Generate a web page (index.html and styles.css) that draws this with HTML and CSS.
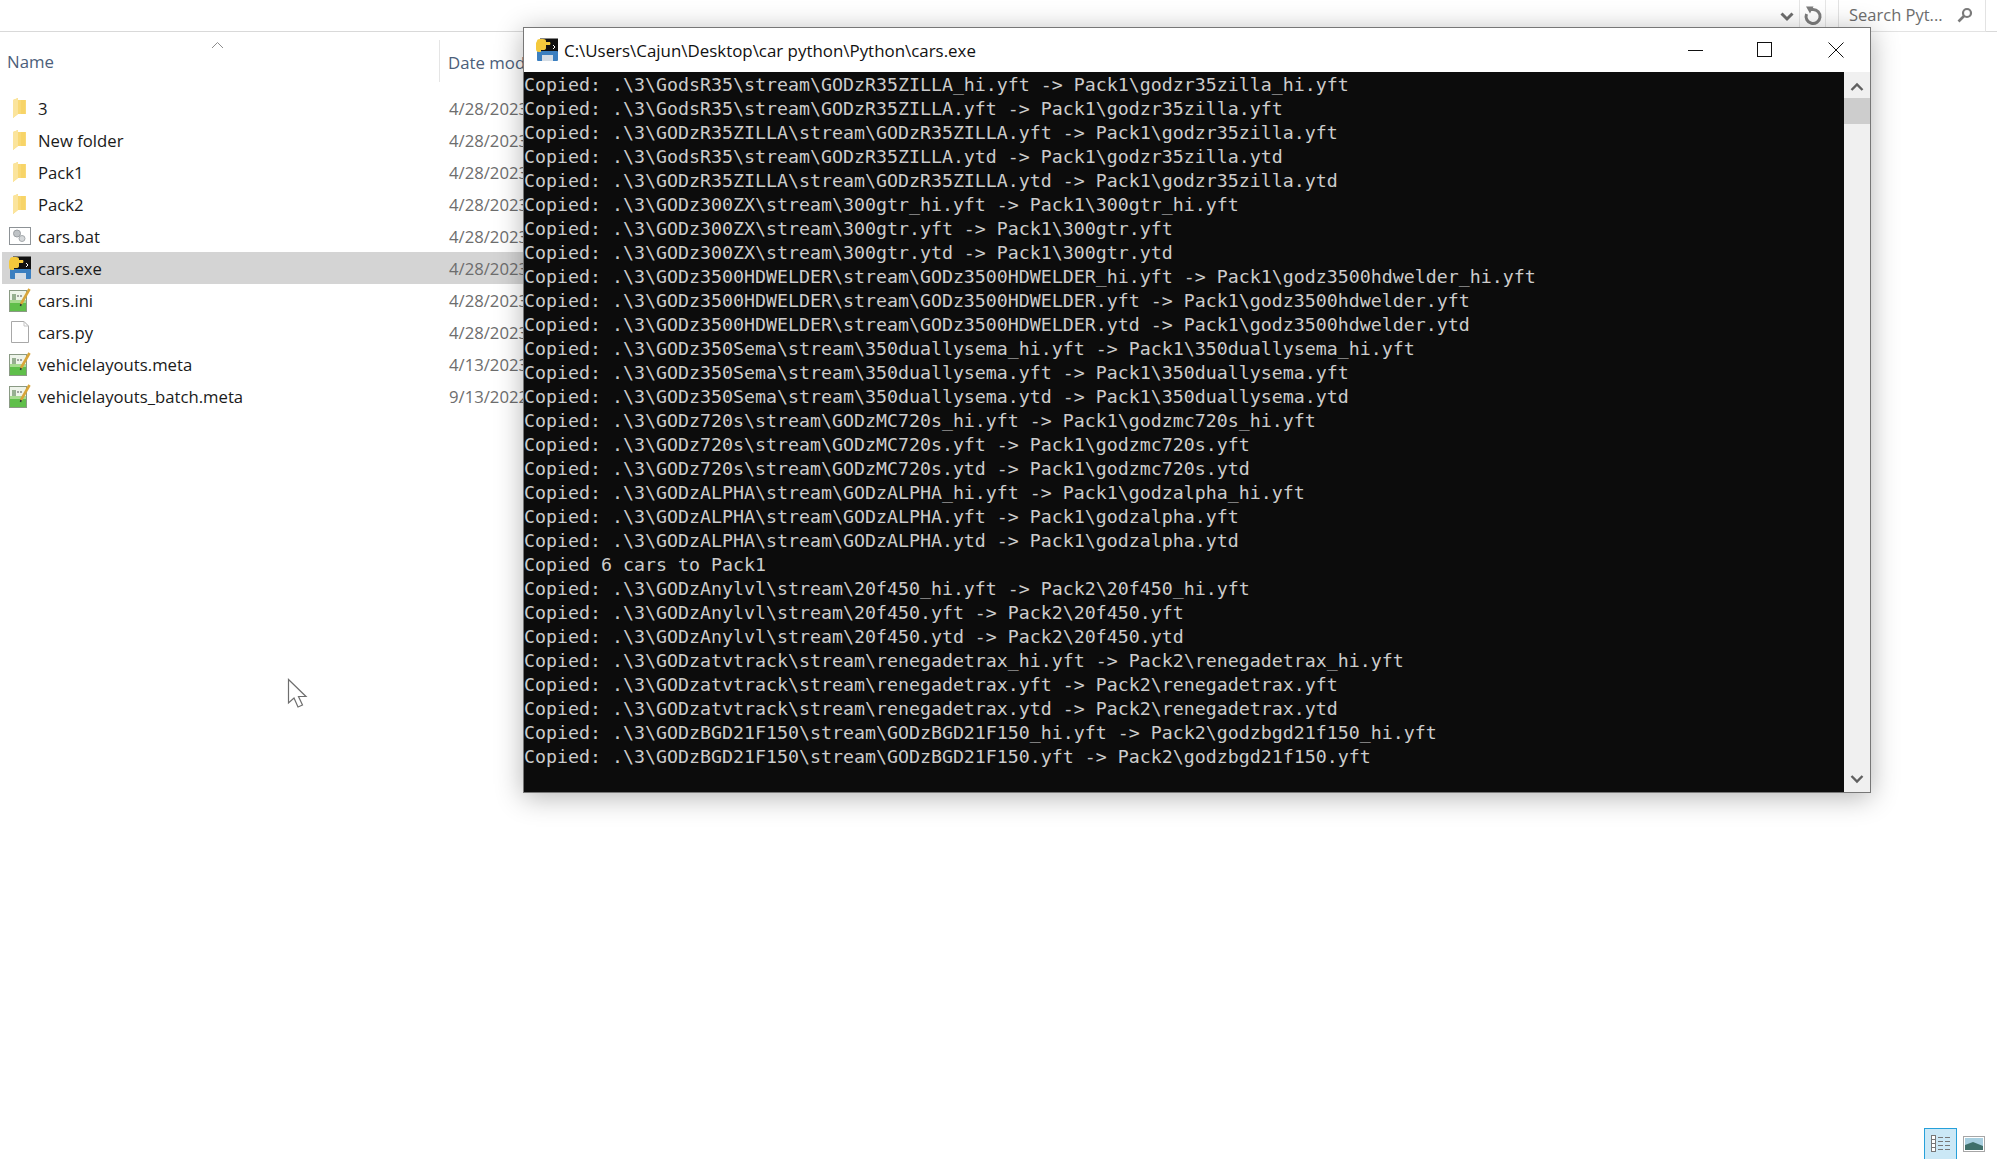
FILE: index.html
```html
<!DOCTYPE html>
<html lang="en">
<head>
<meta charset="utf-8">
<title>cars.exe</title>
<link rel="stylesheet" href="styles.css">
</head>
<body>
<svg class="defs" width="0" height="0" aria-hidden="true">
  <symbol id="folder" viewBox="0 0 22 22">
    <path d="M4 3 L9 1 L9 3 L17 3 L17 17 L9 17 L4 21 Z" fill="#f9d976"/>
    <path d="M4 3 L9 1 L9 17 L4 21 Z" fill="#fbe49c"/>
    <path d="M12 3 H16 V17 H12 Z" fill="#f7d468"/>
  </symbol>
  <symbol id="notes" viewBox="0 0 24 26">
    <rect x="1.5" y="3.5" width="17" height="21" fill="#eef4ea" stroke="#8a9a84"/>
    <path d="M2 15 H18 V24 H2 Z" fill="#5fbf4a"/>
    <path d="M2 13 H18 V16 H2 Z" fill="#a6db8f"/>
    <path d="M5 7 V13 M7 7 V13" stroke="#3f6b36" stroke-width="1"/>
    <path d="M9 9 H14" stroke="#555" stroke-width="1.2" stroke-dasharray="2 1"/>
    <path d="M13 17 L21.500 2" stroke="#d8a53a" stroke-width="2.600"/>
    <path d="M13 17 L12.500 19" stroke="#333" stroke-width="1.500"/>
  </symbol>
  <symbol id="py" viewBox="0 0 24 24">
    <rect x="5" y="0.500" width="18" height="14" fill="#111"/>
    <rect x="2" y="13" width="21" height="10" rx="1" fill="#3b7fc0"/>
    <rect x="7" y="17" width="11" height="6" fill="#d5dde5"/>
    <path d="M2 3 Q2 1 5 1 H8 Q11 1 11 3 V10 Q11 12 8 12 H6 V14 H4 Q1 14 1 11 V5 Z" fill="#f4c93c"/>
    <path d="M11 4 H15 Q16 5 15 7 H11 Z" fill="#f4c93c"/>
    <path d="M18 7 L20 9 L18 11" fill="none" stroke="#fff" stroke-width="1"/>
  </symbol>
</svg>

<div class="explorer">
  <header class="toolbar">
    <svg class="tool-chevron" width="14" height="10" viewBox="0 0 14 10"><path d="M1.500 1.500 L7 7 L12.500 1.500" fill="none" stroke="#6e6e6e" stroke-width="3"/></svg>
    <span class="tool-refresh">
      <svg width="20" height="20" viewBox="0 0 20 20"><path d="M7 3.500 H10 A7 7 0 1 1 3.500 8" fill="none" stroke="#7d7d7d" stroke-width="3"/><path d="M3 0.500 L10.500 0.500 L7 7.500 Z" fill="#7d7d7d"/></svg>
    </span>
    <div class="search">
      <span class="search-text">Search Pyt...</span>
      <svg width="16" height="16" viewBox="0 0 16 16"><circle cx="10" cy="6" r="4" fill="none" stroke="#7a7a7a" stroke-width="2.200"/><path d="M7 9 L1.500 14.500" stroke="#7a7a7a" stroke-width="2.600"/></svg>
    </div>
  </header>

  <div class="columns">
    <div class="col-name">
      <span>Name</span>
      <svg class="sort" width="13" height="8" viewBox="0 0 13 8"><path d="M1 7 L6.500 1.500 L12 7" fill="none" stroke="#8c8c8c"/></svg>
    </div>
    <div class="col-date">Date modified</div>
  </div>

  <ul class="files">
    <li class="file"><span class="ficon"><svg width="22" height="22"><use href="#folder"/></svg></span><span class="fname">3</span><span class="fdate">4/28/2023</span></li>
    <li class="file"><span class="ficon"><svg width="22" height="22"><use href="#folder"/></svg></span><span class="fname">New folder</span><span class="fdate">4/28/2023</span></li>
    <li class="file"><span class="ficon"><svg width="22" height="22"><use href="#folder"/></svg></span><span class="fname">Pack1</span><span class="fdate">4/28/2023</span></li>
    <li class="file"><span class="ficon"><svg width="22" height="22"><use href="#folder"/></svg></span><span class="fname">Pack2</span><span class="fdate">4/28/2023</span></li>
    <li class="file">
      <span class="ficon"><svg width="24" height="20" viewBox="0 0 24 20"><rect x="1.500" y="1.500" width="21" height="17" fill="#fff" stroke="#8d9296"/><circle cx="9" cy="7.500" r="3.500" fill="#bfc3c6" stroke="#9a9ea2"/><circle cx="14" cy="12.500" r="3" fill="#d5d8da" stroke="#a5a9ac"/></svg></span>
      <span class="fname">cars.bat</span><span class="fdate">4/28/2023</span>
    </li>
    <li class="file selected"><span class="ficon"><svg width="24" height="24"><use href="#py"/></svg></span><span class="fname">cars.exe</span><span class="fdate">4/28/2023</span></li>
    <li class="file"><span class="ficon"><svg width="24" height="26"><use href="#notes"/></svg></span><span class="fname">cars.ini</span><span class="fdate">4/28/2023</span></li>
    <li class="file">
      <span class="ficon"><svg width="24" height="24" viewBox="0 0 24 24"><path d="M3.500 1.500 H16 L20.500 6 V22.500 H3.500 Z" fill="#fff" stroke="#a8a8a8"/><path d="M16 1.500 V6 H20.500" fill="none" stroke="#c4c4c4"/></svg></span>
      <span class="fname">cars.py</span><span class="fdate">4/28/2023</span>
    </li>
    <li class="file"><span class="ficon"><svg width="24" height="26"><use href="#notes"/></svg></span><span class="fname">vehiclelayouts.meta</span><span class="fdate">4/13/2023</span></li>
    <li class="file"><span class="ficon"><svg width="24" height="26"><use href="#notes"/></svg></span><span class="fname">vehiclelayouts_batch.meta</span><span class="fdate">9/13/2022</span></li>
  </ul>

  <footer class="viewbar">
    <span class="view view-active">
      <svg width="24" height="22" viewBox="0 0 24 22"><g fill="#fff" stroke="#777"><rect x="2.500" y="2.500" width="4" height="4"/><rect x="2.500" y="6.500" width="4" height="4"/><rect x="2.500" y="10.500" width="4" height="4"/><rect x="2.500" y="14.500" width="4" height="4"/></g><path d="M9 4.500 H14 M16 4.500 H21 M9 8.500 H14 M16 8.500 H21 M9 12.500 H14 M16 12.500 H21 M9 16.500 H14 M16 16.500 H21" stroke="#777"/></svg>
    </span>
    <span class="view">
      <svg width="22" height="16" viewBox="0 0 22 16"><rect x="0.500" y="0.500" width="21" height="15" fill="#fff" stroke="#a6a6a6"/><rect x="2" y="2" width="18" height="12" fill="#a8cfe0"/><path d="M2 9 L10 6 L20 10 V14 H2 Z" fill="#3f6f6a"/></svg>
    </span>
  </footer>
</div>

<svg class="cursor" width="22" height="32" viewBox="0 0 22 32"><path d="M1.500 1.500 V25 L7 20 L11 29 L15.500 27 L11.500 18.500 H19 Z" fill="#fff" stroke="#6e6e6e" stroke-width="1.200"/></svg>

<section class="console">
  <div class="titlebar">
    <span class="title-icon"><svg width="24" height="24"><use href="#py"/></svg></span>
    <span class="title-text">C:\Users\Cajun\Desktop\car python\Python\cars.exe</span>
    <span class="win-btn"><svg width="16" height="16" viewBox="0 0 16 16"><path d="M1 8.500 H16" stroke="#111"/></svg></span>
    <span class="win-btn"><svg width="16" height="16" viewBox="0 0 16 16"><rect x="0.500" y="0.500" width="14" height="14" fill="none" stroke="#111"/></svg></span>
    <span class="win-btn win-close"><svg width="16" height="16" viewBox="0 0 16 16"><path d="M0.500 0.500 L15.500 15.500 M15.500 0.500 L0.500 15.500" stroke="#111"/></svg></span>
  </div>
  <div class="console-body">
<pre class="output">Copied: .\3\GodsR35\stream\GODzR35ZILLA_hi.yft -&gt; Pack1\godzr35zilla_hi.yft
Copied: .\3\GodsR35\stream\GODzR35ZILLA.yft -&gt; Pack1\godzr35zilla.yft
Copied: .\3\GODzR35ZILLA\stream\GODzR35ZILLA.yft -&gt; Pack1\godzr35zilla.yft
Copied: .\3\GodsR35\stream\GODzR35ZILLA.ytd -&gt; Pack1\godzr35zilla.ytd
Copied: .\3\GODzR35ZILLA\stream\GODzR35ZILLA.ytd -&gt; Pack1\godzr35zilla.ytd
Copied: .\3\GODz300ZX\stream\300gtr_hi.yft -&gt; Pack1\300gtr_hi.yft
Copied: .\3\GODz300ZX\stream\300gtr.yft -&gt; Pack1\300gtr.yft
Copied: .\3\GODz300ZX\stream\300gtr.ytd -&gt; Pack1\300gtr.ytd
Copied: .\3\GODz3500HDWELDER\stream\GODz3500HDWELDER_hi.yft -&gt; Pack1\godz3500hdwelder_hi.yft
Copied: .\3\GODz3500HDWELDER\stream\GODz3500HDWELDER.yft -&gt; Pack1\godz3500hdwelder.yft
Copied: .\3\GODz3500HDWELDER\stream\GODz3500HDWELDER.ytd -&gt; Pack1\godz3500hdwelder.ytd
Copied: .\3\GODz350Sema\stream\350duallysema_hi.yft -&gt; Pack1\350duallysema_hi.yft
Copied: .\3\GODz350Sema\stream\350duallysema.yft -&gt; Pack1\350duallysema.yft
Copied: .\3\GODz350Sema\stream\350duallysema.ytd -&gt; Pack1\350duallysema.ytd
Copied: .\3\GODz720s\stream\GODzMC720s_hi.yft -&gt; Pack1\godzmc720s_hi.yft
Copied: .\3\GODz720s\stream\GODzMC720s.yft -&gt; Pack1\godzmc720s.yft
Copied: .\3\GODz720s\stream\GODzMC720s.ytd -&gt; Pack1\godzmc720s.ytd
Copied: .\3\GODzALPHA\stream\GODzALPHA_hi.yft -&gt; Pack1\godzalpha_hi.yft
Copied: .\3\GODzALPHA\stream\GODzALPHA.yft -&gt; Pack1\godzalpha.yft
Copied: .\3\GODzALPHA\stream\GODzALPHA.ytd -&gt; Pack1\godzalpha.ytd
Copied 6 cars to Pack1
Copied: .\3\GODzAnylvl\stream\20f450_hi.yft -&gt; Pack2\20f450_hi.yft
Copied: .\3\GODzAnylvl\stream\20f450.yft -&gt; Pack2\20f450.yft
Copied: .\3\GODzAnylvl\stream\20f450.ytd -&gt; Pack2\20f450.ytd
Copied: .\3\GODzatvtrack\stream\renegadetrax_hi.yft -&gt; Pack2\renegadetrax_hi.yft
Copied: .\3\GODzatvtrack\stream\renegadetrax.yft -&gt; Pack2\renegadetrax.yft
Copied: .\3\GODzatvtrack\stream\renegadetrax.ytd -&gt; Pack2\renegadetrax.ytd
Copied: .\3\GODzBGD21F150\stream\GODzBGD21F150_hi.yft -&gt; Pack2\godzbgd21f150_hi.yft
Copied: .\3\GODzBGD21F150\stream\GODzBGD21F150.yft -&gt; Pack2\godzbgd21f150.yft</pre>
    <div class="scrollbar">
      <svg class="scroll-arrow" width="16" height="10" viewBox="0 0 16 10"><path d="M2.500 8 L8 2.500 L13.500 8" fill="none" stroke="#606060" stroke-width="2.400"/></svg>
      <div class="scroll-thumb"></div>
      <svg class="scroll-arrow scroll-down" width="16" height="10" viewBox="0 0 16 10"><path d="M2.500 2 L8 7.500 L13.500 2" fill="none" stroke="#606060" stroke-width="2.400"/></svg>
    </div>
  </div>
</section>
</body>
</html>
```

FILE: styles.css
```css
* { box-sizing: border-box; }

html, body {
  margin: 0;
  height: 100%;
  overflow: hidden;
  background: #fff;
}

body {
  position: relative;
  font-family: "Open Sans", "Noto Sans", sans-serif;
}

.defs { position: absolute; }

.explorer {
  display: flex;
  flex-direction: column;
  height: 100vh;
}

/* Top strip */
.toolbar {
  display: flex;
  align-items: flex-start;
  justify-content: flex-end;
  height: 32px;
  flex: none;
  padding-right: 11px;
  border-bottom: 1px solid #d9d9d9;
}

.tool-chevron { margin-right: 5px; margin-top: 12px; }

.tool-refresh {
  display: flex;
  align-items: center;
  justify-content: center;
  width: 27px;
  height: 31px;
  border-left: 1px solid #e6e6e6;
  border-right: 1px solid #e6e6e6;
  margin-right: 12px;
}

.search {
  display: flex;
  align-items: center;
  justify-content: space-between;
  width: 148px;
  height: 32px;
  padding: 0 12px 2px 10px;
  border: 1px solid #e3e3e3;
  border-top: 0;
  color: #6d6d6d;
}

.search-text { font-size: 16.500px; }

/* Column headers */
.columns {
  display: flex;
  height: 42px;
  flex: none;
  color: #4c607a;
  font-size: 16.800px;
}

.col-name {
  position: relative;
  display: flex;
  align-items: center;
  width: 440px;
  padding-left: 7px;
  padding-top: 8px;
  border-right: 1px solid #e5e5e5;
  margin-top: 8px;
  height: 42px;
  margin-bottom: -8px;
  padding-bottom: 8px;
}

.sort { position: absolute; left: 211px; top: 1px; }

.col-date {
  padding-left: 8px;
  padding-top: 19px;
  white-space: nowrap;
}

/* File rows */
.files {
  list-style: none;
  margin: 0;
  padding: 18px 0 0 2px;
  flex: 1;
  width: 526px;
}

.file {
  display: flex;
  align-items: center;
  height: 32px;
  color: #1a1a1a;
  font-size: 16.700px;
}

.selected { background: #d4d4d4; }

.ficon {
  display: flex;
  align-items: center;
  justify-content: center;
  width: 24px;
  margin-left: 6px;
  margin-right: 6px;
  flex: none;
}

.fname { width: 411px; white-space: nowrap; flex: none; }

.fdate { color: #6d6d6d; white-space: nowrap; }

/* Bottom right view switch */
.viewbar {
  display: flex;
  align-items: flex-end;
  justify-content: flex-end;
  gap: 6px;
  height: 31px;
  flex: none;
  padding-right: 12px;
}

.view {
  display: flex;
  align-items: center;
  justify-content: center;
  height: 31px;
}

.view-active {
  width: 33px;
  background: #cbe8f6;
  border: 1px solid #26a0da;
  border-bottom: 0;
}

/* Mouse pointer lying over the list */
.cursor {
  position: absolute;
  left: 287px;
  top: 678px;
}

/* Console window lying over the explorer */
.console {
  position: absolute;
  left: 523px;
  top: 27px;
  width: 1348px;
  height: 766px;
  display: flex;
  flex-direction: column;
  background: #fff;
  border: 1px solid #777;
  box-shadow: 0 4px 26px rgba(0, 0, 0, 0.3);
}

.titlebar {
  display: flex;
  align-items: center;
  height: 44px;
  flex: none;
  padding-left: 11px;
}

.title-icon { display: flex; margin-right: 5px; }

.title-text {
  flex: 1;
  font-size: 16.900px;
  color: #111;
  white-space: nowrap;
}

.win-btn {
  display: flex;
  align-items: center;
  justify-content: center;
  width: 70px;
  height: 44px;
}

.win-close { padding-left: 2px; }

.console-body {
  flex: 1;
  display: flex;
  min-height: 0;
}

.output {
  flex: 1;
  margin: 0;
  padding-top: 1px;
  background: #0c0c0c;
  color: #cccccc;
  font-family: "DejaVu Sans Mono", "Liberation Mono", monospace;
  font-size: 18.270px;
  line-height: 24px;
  overflow: hidden;
}

.scrollbar {
  position: relative;
  flex: none;
  width: 26px;
  background: #f0f0f0;
  display: flex;
  flex-direction: column;
  align-items: center;
}

.scroll-arrow { margin-top: 10px; flex: none; }

.scroll-thumb {
  align-self: stretch;
  height: 26px;
  margin-top: 6px;
  background: #cdcdcd;
}

.scroll-down { margin-top: auto; margin-bottom: 8px; }
```
